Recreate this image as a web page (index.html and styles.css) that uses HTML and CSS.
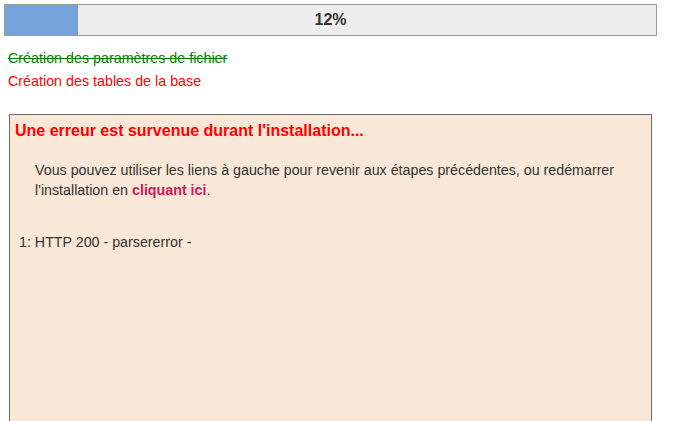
FILE: index.html
```html
<!DOCTYPE html>
<html lang="fr">
<head>
<meta charset="utf-8">
<title>Installation</title>
<link rel="stylesheet" href="styles.css">
</head>
<body>
<div class="page">
  <div class="progress">
    <div class="progress-fill" style="width:73px"></div>
    <div class="progress-label">12%</div>
  </div>
  <ul class="steps">
    <li class="step done">Création des paramètres de fichier</li>
    <li class="step current">Création des tables de la base</li>
  </ul>
  <div class="error-box">
    <h2 class="error-title">Une erreur est survenue durant l'installation...</h2>
    <p class="error-text">Vous pouvez utiliser les liens à gauche pour revenir aux étapes précédentes, ou redémarrer l'installation en <a class="restart" href="#">cliquant ici</a>.</p>
    <div class="error-log">1: HTTP 200 - parsererror -</div>
  </div>
</div>
</body>
</html>
```

FILE: styles.css
```css
html, body {
  margin: 0;
  padding: 0;
  background: #ffffff;
}
body {
  font-family: "Liberation Sans", Arial, sans-serif;
  color: #333333;
  height: 421px;
  overflow: hidden;
}
.page {
  padding: 4px 0 0 4px;
  width: 686px;
  height: 421px;
  box-sizing: border-box;
  overflow: hidden;
}
.progress {
  position: relative;
  width: 653px;
  height: 32px;
  box-sizing: border-box;
  border: 1px solid #9a9a9a;
  background: #eeeeee;
  display: flex;
}
.progress-fill {
  height: 100%;
  background: #77a3dc;
}
.progress-label {
  position: absolute;
  inset: 0;
  text-align: center;
  line-height: 30px;
  font-size: 16px;
  font-weight: bold;
  color: #333333;
}
.steps {
  list-style: none;
  margin: 11px 0 0 4px;
  padding: 0;
  font-size: 14.3px;
  line-height: 23px;
}
.step.done {
  color: #008000;
  text-decoration: line-through;
}
.step.current {
  color: #ff0000;
}
.error-box {
  margin: 21px 0 0 5px;
  width: 643px;
  height: 310px;
  box-sizing: border-box;
  border: 1px solid #6b6b6b;
  background: #f9e7d7;
  padding: 6px 5px 0 5px;
}
.error-title {
  margin: 0;
  font-size: 16px;
  line-height: 20px;
  font-weight: bold;
  color: #ff0000;
}
.error-text {
  margin: 19px 0 0 0;
  padding-left: 20px;
  font-size: 14.25px;
  line-height: 20px;
  color: #333333;
}
.restart {
  color: #d0195a;
  font-weight: bold;
  text-decoration: none;
}
.error-log {
  margin-top: 32px;
  padding-left: 4px;
  font-size: 14.25px;
  line-height: 20px;
  color: #333333;
}
```
